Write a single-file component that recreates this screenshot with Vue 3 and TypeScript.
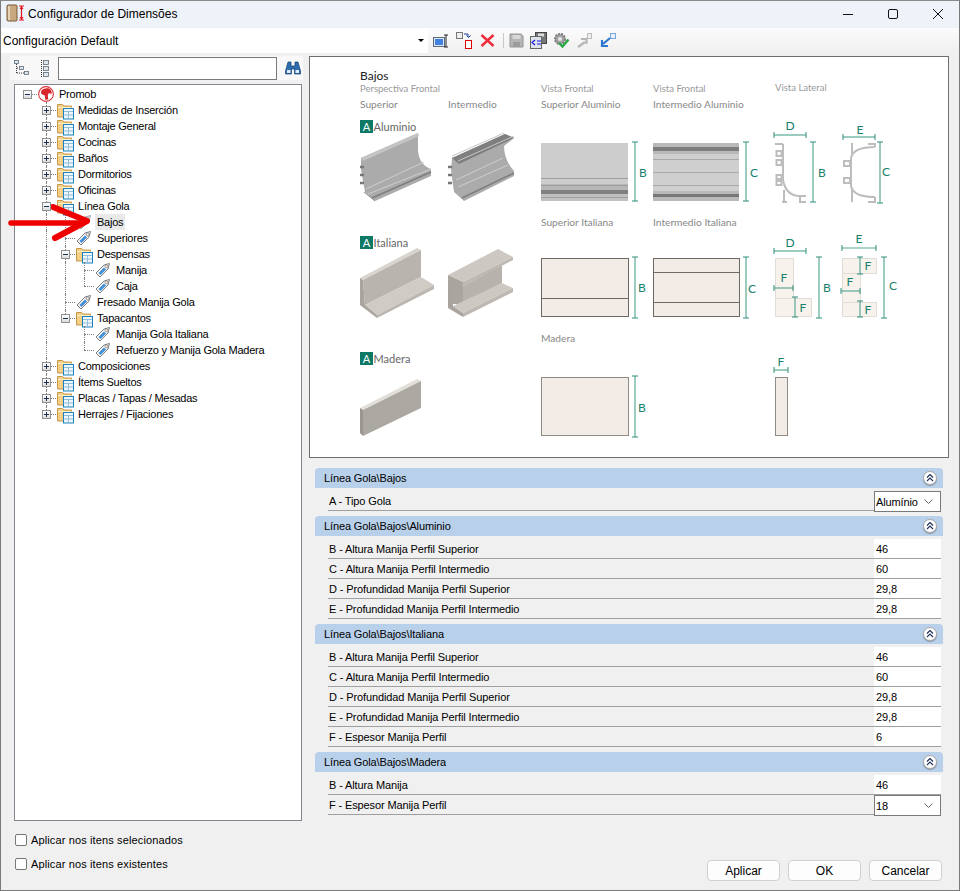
<script setup lang="ts">
type TreeRow = {
	label: string;
	cells: string[];
	icon: "logo" | "folder" | "tag" | "tagGray";
	selected?: boolean;
};

type ParamRow = { label: string; value: string; select?: boolean };
type Section = { title: string; rows: ParamRow[] };

const treeRows: TreeRow[] = [
	{ label: "Promob", cells: ["stub-"], icon: "logo" },
	{ label: "Medidas de Inserción", cells: ["none", "tee+"], icon: "folder" },
	{ label: "Montaje General", cells: ["none", "tee+"], icon: "folder" },
	{ label: "Cocinas", cells: ["none", "tee+"], icon: "folder" },
	{ label: "Baños", cells: ["none", "tee+"], icon: "folder" },
	{ label: "Dormitorios", cells: ["none", "tee+"], icon: "folder" },
	{ label: "Oficinas", cells: ["none", "tee+"], icon: "folder" },
	{ label: "Línea Gola", cells: ["none", "tee-"], icon: "folder" },
	{ label: "Bajos", cells: ["none", "line", "tee"], icon: "tagGray", selected: true },
	{ label: "Superiores", cells: ["none", "line", "tee"], icon: "tag" },
	{ label: "Despensas", cells: ["none", "line", "tee-"], icon: "folder" },
	{ label: "Manija", cells: ["none", "line", "line", "tee"], icon: "tag" },
	{ label: "Caja", cells: ["none", "line", "line", "elbow"], icon: "tag" },
	{ label: "Fresado Manija Gola", cells: ["none", "line", "tee"], icon: "tag" },
	{ label: "Tapacantos", cells: ["none", "line", "elbow-"], icon: "folder" },
	{ label: "Manija Gola Italiana", cells: ["none", "line", "none", "tee"], icon: "tag" },
	{ label: "Refuerzo y Manija Gola Madera", cells: ["none", "line", "none", "elbow"], icon: "tag" },
	{ label: "Composiciones", cells: ["none", "tee+"], icon: "folder" },
	{ label: "Ítems Sueltos", cells: ["none", "tee+"], icon: "folder" },
	{ label: "Placas / Tapas / Mesadas", cells: ["none", "tee+"], icon: "folder" },
	{ label: "Herrajes / Fijaciones", cells: ["none", "elbow+"], icon: "folder" },
];

const sections: Section[] = [
	{
		title: "Línea Gola\\Bajos",
		rows: [{ label: "A - Tipo Gola", value: "Alumínio", select: true }],
	},
	{
		title: "Línea Gola\\Bajos\\Aluminio",
		rows: [
			{ label: "B - Altura Manija Perfil Superior", value: "46" },
			{ label: "C - Altura Manija Perfil Intermedio", value: "60" },
			{ label: "D - Profundidad Manija Perfil Superior", value: "29,8" },
			{ label: "E - Profundidad Manija Perfil Intermedio", value: "29,8" },
		],
	},
	{
		title: "Línea Gola\\Bajos\\Italiana",
		rows: [
			{ label: "B - Altura Manija Perfil Superior", value: "46" },
			{ label: "C - Altura Manija Perfil Intermedio", value: "60" },
			{ label: "D - Profundidad Manija Perfil Superior", value: "29,8" },
			{ label: "E - Profundidad Manija Perfil Intermedio", value: "29,8" },
			{ label: "F - Espesor Manija Perfil", value: "6" },
		],
	},
	{
		title: "Línea Gola\\Bajos\\Madera",
		rows: [
			{ label: "B - Altura Manija", value: "46" },
			{ label: "F - Espesor Manija Perfil", value: "18", select: true },
		],
	},
];

// each dimension line: [x1, y1, x2, y2], ticks are drawn across both ends
const dims: number[][] = [
	[635, 142, 635, 201],
	[746, 142, 746, 201],
	[774, 135, 806, 135],
	[813, 142, 813, 202],
	[843, 137, 875, 137],
	[880, 142, 880, 203],
	[635, 257, 635, 318],
	[746, 257, 746, 318],
	[774, 251, 806, 251],
	[819, 257, 819, 318],
	[842, 248, 876, 248],
	[884, 257, 884, 318],
	[635, 376, 635, 437],
	[774, 370, 788, 370],
	[774, 288, 793, 288],
	[795, 297, 795, 317],
	[841, 291, 860, 291],
	[860, 257, 860, 274],
	[860, 301, 860, 317],
];

const dimLabels: [string, number, number][] = [
	["B", 643, 177],
	["C", 754, 177],
	["D", 790, 130],
	["B", 822, 177],
	["E", 860, 134],
	["C", 886, 176],
	["B", 642, 292],
	["C", 752, 293],
	["D", 790, 247],
	["B", 827, 292],
	["E", 859, 243],
	["C", 893, 290],
	["B", 642, 412],
	["F", 781, 366],
	["F", 784, 282],
	["F", 803, 312],
	["F", 868, 270],
	["F", 850, 286],
	["F", 868, 314],
];

const badges: [number, string][] = [
	[120, "Aluminio"],
	[236, "Italiana"],
	[352, "Madera"],
];

function ticks(d: number[]) {
	const [x1, y1, x2, y2] = d;
	if (x1 === x2) return `M${x1 - 3},${y1}H${x1 + 3}M${x2 - 3},${y2}H${x2 + 3}`;
	return `M${x1},${y1 - 3}V${y1 + 3}M${x2},${y2 - 3}V${y2 + 3}`;
}

function cellKind(cell: string) {
	return cell.replace(/[+-]$/, "");
}

function cellBox(cell: string) {
	if (cell.endsWith("+")) return "plus";
	if (cell.endsWith("-")) return "minus";
	return "";
}
</script>

<template>
	<div class="window">
		<svg class="defs" width="0" height="0">
			<symbol id="folder" viewBox="0 0 18 18">
				<path d="M0.5 2.5h5l1.5 1.5h7.5v11h-14z" fill="#f4cf85" stroke="#c4974a" />
				<path d="M1 5.5h13.5" stroke="#fff0c8" />
				<rect x="6.5" y="6.5" width="10" height="10.5" fill="#eef6fb" stroke="#1c82c0" />
				<path d="M7 9.5h9M7 13h9M11.5 10v6.5" stroke="#8fbfdd" />
			</symbol>
			<symbol id="tag" viewBox="0 0 16 16">
				<path d="M1 11l8-8 5.500-1.500-1.500 5.500-8 8z" fill="#f4f4f4" stroke="#7d7d7d" />
				<path d="M3.500 11l5.500-5.500 2 2-5.500 5.500z" fill="#3f8fd6" />
				<circle cx="11.500" cy="4.500" r="1.300" fill="#fff" stroke="#777" stroke-width="0.800" />
			</symbol>
			<symbol id="tagGray" viewBox="0 0 16 16">
				<path d="M1 11l8-8 5.500-1.500-1.500 5.500-8 8z" fill="#e4e4e4" stroke="#a5a5a5" />
				<circle cx="11.500" cy="4.500" r="1.300" fill="#fff" stroke="#999" stroke-width="0.800" />
			</symbol>
			<symbol id="logo" viewBox="0 0 16 16">
				<circle cx="8" cy="8" r="7.400" fill="#fff" stroke="#d8353a" stroke-width="1.100" />
				<path d="M3 5.500C4.500 2.500 8 1.800 11 2.500c2 1 3 3 2.600 5.500l-2.800-1-1 2.500 0.500 4-3 0.300-0.500-4.300-3.500-1.500z" fill="#d8252c" />
			</symbol>
		</svg>

		<header class="titlebar">
			<svg class="app-icon" width="22" height="20" viewBox="0 0 22 20">
				<rect x="1" y="1" width="10" height="16" rx="1" fill="#c9a77f" stroke="#7a5a3c" />
				<rect x="2" y="2" width="2" height="14" fill="#e6d2b4" />
				<path d="M13 2h5M15.500 2v14M13 16h5" stroke="#e2141e" stroke-width="1.200" fill="none" />
				<path d="M15.500 2l2 3h-4zM15.500 16l2-3h-4z" fill="#e2141e" />
			</svg>
			<span class="title">Configurador de Dimensões</span>
			<div class="win-controls">
				<svg width="12" height="12" viewBox="0 0 12 12"><path d="M1 6.500h10" stroke="#111" /></svg>
				<svg width="12" height="12" viewBox="0 0 12 12"><rect x="1.500" y="1.500" width="9" height="9" rx="1.500" fill="none" stroke="#111" /></svg>
				<svg width="12" height="12" viewBox="0 0 12 12"><path d="M1 1l10 10M11 1l-10 10" stroke="#111" /></svg>
			</div>
		</header>

		<div class="configbar">
			<div class="combo">
				<span>Configuración Default</span>
				<i class="combo-arrow"></i>
			</div>
			<div class="tools">
				<svg width="16" height="16" viewBox="0 0 16 16">
					<rect x="0.500" y="4.500" width="11" height="9" fill="#dfe8f5" stroke="#5b6b80" />
					<rect x="2" y="6" width="8" height="6" fill="#3f80e0" />
					<path d="M11 2h4M13 2v12M11 14h4" stroke="#222" fill="none" />
				</svg>
				<svg width="17" height="17" viewBox="0 0 17 17" class="t-gap">
					<rect x="0.500" y="0.500" width="6" height="6" fill="#eee" stroke="#777" />
					<path d="M8 2h4v3M10.500 3.500l2 2 2-2" stroke="#1a3f9a" fill="none" />
					<rect x="9.500" y="8.500" width="6" height="8" fill="#fff" stroke="#e00000" />
				</svg>
				<svg width="15" height="15" viewBox="0 0 15 15" class="t-gap">
					<path d="M1.500 2l12 11M13.500 2l-12 11" stroke="#ee2b38" stroke-width="2.400" />
				</svg>
				<i class="sep"></i>
				<svg width="15" height="15" viewBox="0 0 15 15" class="t-save">
					<path d="M1 1h11l2 2v11h-13z" fill="#b5b5b5" stroke="#949494" />
					<rect x="3.500" y="2" width="8" height="4" fill="#d8d8d8" />
					<rect x="4" y="9" width="7" height="5" fill="#9c9c9c" />
				</svg>
				<svg width="17" height="17" viewBox="0 0 17 17" class="t-gap3">
					<rect x="5.500" y="0.500" width="11" height="11" fill="#777" stroke="#444" />
					<rect x="8" y="1.500" width="6" height="3" fill="#ddd" />
					<rect x="0.500" y="4.500" width="11" height="12" fill="#dfe4ea" stroke="#666" />
					<path d="M5 8l-3 2.500 3 2.500M7 9h4M7 12h4" stroke="#1616e0" fill="none" stroke-width="1.200" />
				</svg>
				<svg width="17" height="17" viewBox="0 0 17 17" class="t-gap3">
					<circle cx="7" cy="7" r="5" fill="#a3a3a3" stroke="#7c7c7c" stroke-width="2" stroke-dasharray="2 1" />
					<circle cx="7" cy="7" r="2" fill="#e6e6e6" />
					<path d="M6 11l3.500 3.500 6-7" stroke="#27a645" stroke-width="2.400" fill="none" />
				</svg>
				<svg width="16" height="16" viewBox="0 0 16 16" class="t-gap">
					<rect x="10.500" y="0.500" width="4" height="5" fill="#eee" stroke="#bbb" />
					<path d="M1 14l7-5M4 6h5.500v5" stroke="#b5b5b5" stroke-width="2.200" fill="none" />
				</svg>
				<svg width="16" height="16" viewBox="0 0 16 16" class="t-gap">
					<rect x="10.500" y="0.500" width="5" height="5" fill="#e8f1fb" stroke="#7aa7dc" />
					<path d="M10 5l-7 6M2 7v6h6" stroke="#2f78cf" stroke-width="2.200" fill="none" />
				</svg>
			</div>
		</div>

		<main class="content">
			<aside class="left">
				<div class="tree-tools">
					<svg class="tt-a" width="15" height="16" viewBox="0 0 15 16">
						<g fill="#dfe6ee" stroke="#5f6b78" stroke-width="0.800">
							<rect x="0.500" y="0.500" width="4" height="3" />
							<rect x="5.500" y="6.500" width="4" height="3" />
							<rect x="10.500" y="11.500" width="4" height="3" />
						</g>
						<path d="M2.500 4v9M3 8h2M3 13h7" stroke="#333" stroke-dasharray="1 1" fill="none" />
					</svg>
					<svg class="tt-b" width="10" height="17" viewBox="0 0 10 17">
						<path d="M1.500 0v17" stroke="#333" stroke-dasharray="1 1" />
						<g fill="#dfe6ee" stroke="#5f6b78" stroke-width="0.800">
							<rect x="3.500" y="0.500" width="5" height="4" />
							<rect x="3.500" y="6.500" width="5" height="4" />
							<rect x="3.500" y="12.500" width="5" height="4" />
						</g>
					</svg>
					<div class="search"></div>
					<svg class="binoc" width="16" height="14" viewBox="0 0 16 14">
						<path d="M3 1h3v4h4V1h3l2.500 9v3h-6V8H6.500v5h-6v-3z" fill="#2f6cae" stroke="#16406e" stroke-width="0.700" />
						<rect x="2" y="9" width="3.500" height="3" fill="#dfeafa" />
						<rect x="10.500" y="9" width="3.500" height="3" fill="#dfeafa" />
					</svg>
				</div>
				<div class="tree">
					<div v-for="row in treeRows" :key="row.label" class="tree-row">
						<span
							v-for="(cell, i) in row.cells"
							:key="i"
							class="cell"
							:class="cellKind(cell)"
						>
							<i v-if="cellBox(cell)" class="box" :class="cellBox(cell)"></i>
						</span>
						<svg
							class="node-icon"
							:class="{ 'node-folder': row.icon === 'folder' }"
							:width="row.icon === 'folder' ? 18 : 16"
							:height="row.icon === 'folder' ? 18 : 16"
						>
							<use :href="'#' + row.icon" />
						</svg>
						<span class="node-label" :class="{ selected: row.selected }">{{ row.label }}</span>
					</div>
				</div>
				<div class="checks">
					<label class="check"><i></i>Aplicar nos itens selecionados</label>
					<label class="check"><i></i>Aplicar nos itens existentes</label>
				</div>
			</aside>

			<section class="right">
				<div class="preview">
					<svg class="drawing" viewBox="310 57 638 400" width="638" height="400">
						<g class="d-title">
							<text x="360" y="80" class="h1">Bajos</text>
							<text x="360" y="92" class="sub">Perspectiva Frontal</text>
							<text x="541" y="92" class="sub">Vista Frontal</text>
							<text x="653" y="92" class="sub">Vista Frontal</text>
							<text x="775" y="91" class="sub">Vista Lateral</text>
							<text x="360" y="108" class="name">Superior</text>
							<text x="448" y="108" class="name">Intermedio</text>
							<text x="541" y="108" class="name">Superior Aluminio</text>
							<text x="653" y="108" class="name">Intermedio Aluminio</text>
							<text x="541" y="226" class="name">Superior Italiana</text>
							<text x="653" y="226" class="name">Intermedio Italiana</text>
							<text x="541" y="342" class="name">Madera</text>
						</g>

						<g v-for="[y, label] in badges" :key="label">
							<rect x="360" :y="y" width="13" height="13" fill="#0e7a66" />
							<text x="366.500" :y="y + 10.500" class="badge">A</text>
							<text x="373.500" :y="y + 11" class="name dark">{{ label }}</text>
						</g>

						<!-- aluminio superior -->
						<path d="M361 158L418 133V150Q419 165 431 169V176L375 201L365 192L361 170Z" fill="#ababab" />
						<path d="M361 158L418 133L419 136L363 161Z" fill="#c4c4c4" />
						<path d="M366 189L424 162M368 194L431 169" stroke="#cfcfcf" fill="none" />
						<path d="M372 198L431 172" stroke="#7e7e7e" stroke-width="1.500" />
						<path d="M360 167h4M360 175h4M360 183h4" stroke="#777" stroke-width="2.500" />
						<path d="M364 192l11 9" stroke="#8a8a8a" />

						<!-- aluminio intermedio -->
						<path d="M452 158L505 134L514 138L504 146Q504 160 514 171V176L464 201L454 192L451 170Z" fill="#ababab" />
						<path d="M452 158L505 134L514 138L459 164Z" fill="#7f7f7f" />
						<path d="M452 156L504 133M458 161L514 136" stroke="#c6c6c6" />
						<path d="M456 180L503 158M458 187L508 165" stroke="#cfcfcf" />
						<path d="M462 198L514 173" stroke="#7e7e7e" stroke-width="1.500" />
						<path d="M448 167h4M448 175h4M448 183h4" stroke="#777" stroke-width="2.500" />

						<!-- frentes aluminio -->
						<rect x="541" y="143" width="87" height="58" fill="#cdcdcd" />
						<rect x="541" y="184" width="87" height="6" fill="#b7b7b7" />
						<rect x="541" y="190" width="87" height="4" fill="#808080" />
						<rect x="541" y="194" width="87" height="7" fill="#c0c0c0" />
						<path d="M541 178.500h87M541 185.500h87M541 197.500h87" stroke="#9e9e9e" />
						<rect x="653" y="143" width="86" height="58" fill="#cfcfcf" />
						<rect x="653" y="143" width="86" height="11" fill="#b9b9b9" />
						<rect x="653" y="147" width="86" height="4" fill="#7c7c7c" />
						<rect x="653" y="191" width="86" height="10" fill="#b9b9b9" />
						<rect x="653" y="194" width="86" height="3" fill="#777" />
						<path d="M653 159.500h86M653 172.500h86M653 185.500h86" stroke="#a9a9a9" />

						<!-- perfiles laterales -->
						<g fill="none" stroke="#bdbdbd" stroke-width="2">
							<path d="M783 144V180Q786 196 800 196H806M775 144H783M784 190V202M787 202H782M800 196V202H806" />
							<rect x="776.500" y="151" width="5" height="5" />
							<rect x="776.500" y="160" width="5" height="5" />
							<rect x="776.500" y="175" width="5" height="4" />
							<rect x="776.500" y="181" width="5" height="4" />
							<path d="M851 158Q853 147 875 147M852 143V156M868 144H875V147M851 158V186Q853 197 875 197M852 188V202M868 202H875V197" />
							<rect x="844" y="161" width="6" height="5" />
							<rect x="844" y="178" width="6" height="5" />
						</g>

						<!-- italiana superior -->
						<path d="M360 278L417 248L421 250L363 280Z" fill="#d9d5ce" />
						<path d="M363 280L421 250V277L365 305Z" fill="#b9b5ae" />
						<path d="M365 305L421 277L434 285L377 315Z" fill="#d0ccc5" />
						<path d="M360 278L363 280L365 305L377 315V318L360 305Z" fill="#a9a59e" />
						<path d="M377 315L434 285V289L377 318Z" fill="#bcb8b1" />

						<!-- italiana intermedio -->
						<path d="M463 286L502 265V283L463 304Z" fill="#b7b3ac" />
						<path d="M453 280L463 286V304L453 304Z" fill="#aaa69f" />
						<path d="M448 275L498 249L513 257L463 282Z" fill="#cdc9c2" />
						<path d="M448 275L463 282V286L448 279Z" fill="#a9a59e" />
						<path d="M463 282L513 257V260L463 286Z" fill="#bdb9b2" />
						<path d="M448 279L453 280V306L463 313V317L448 308Z" fill="#a9a59e" />
						<path d="M453 306L502 283L513 288L463 313Z" fill="#cdc9c2" />
						<path d="M463 313L513 288V292L463 317Z" fill="#bdb9b2" />

						<!-- madera -->
						<path d="M360 408L417 379L421 381L363 410Z" fill="#e3dfd9" />
						<path d="M363 410L421 381V408L363 436Z" fill="#aba7a1" />
						<path d="M360 408L363 410V436L360 433Z" fill="#9a968f" />

						<!-- frentes italiana y madera -->
						<g fill="#f3ece6" stroke="#6d6963">
							<rect x="541.500" y="258.500" width="87" height="58" />
							<path d="M541 298.500h88" />
							<rect x="653.500" y="258.500" width="86" height="58" />
							<path d="M653 272.500h87M653 302.500h87" />
						</g>
						<g fill="#f3ece6" stroke="#8f8b85">
							<rect x="541.500" y="377.500" width="87" height="58" />
							<rect x="775.500" y="377.500" width="12" height="58" />
						</g>

						<!-- laterales italiana -->
						<g fill="#f8f2ec" stroke="#e2dcd6">
							<path d="M775.500 258.500H793.500V298.500H811.500V316.500H775.500Z" />
							<path d="M775.500 298.500H793.500" />
							<path d="M842.500 258.500H876.500V273.500H860.500V302.500H876.500V316.500H842.500Z" />
							<path d="M842.500 273.500H860.500M842.500 302.500H860.500" />
						</g>

						<g v-for="(d, i) in dims" :key="i" stroke="#5aa896" fill="none">
							<line :x1="d[0]" :y1="d[1]" :x2="d[2]" :y2="d[3]" stroke-width="1.200" />
							<path :d="ticks(d)" stroke="#2f8c78" />
						</g>
						<text v-for="(l, i) in dimLabels" :key="i" :x="l[1]" :y="l[2]" class="dim">{{ l[0] }}</text>
					</svg>
				</div>

				<div class="params">
					<div v-for="s in sections" :key="s.title" class="group">
						<div class="group-head">
							<span>{{ s.title }}</span>
							<i class="collapse">
								<svg width="8" height="8" viewBox="0 0 8 8"><path d="M1 3.500l3-3 3 3M1 7l3-3 3 3" fill="none" stroke="#1c2d5a" stroke-width="1.100" /></svg>
							</i>
						</div>
						<div class="group-body">
							<div v-for="r in s.rows" :key="r.label" class="param">
								<span class="param-label">{{ r.label }}</span>
								<div class="param-value" :class="{ 'is-select': r.select }">
									<span>{{ r.value }}</span>
									<svg v-if="r.select" width="9" height="5" viewBox="0 0 9 5"><path d="M0.500 0.500l4 4 4-4" fill="none" stroke="#666" /></svg>
								</div>
							</div>
						</div>
					</div>
				</div>

				<div class="buttons">
					<button type="button">Aplicar</button>
					<button type="button">OK</button>
					<button type="button">Cancelar</button>
				</div>
			</section>
		</main>

		<svg class="arrow" width="96" height="44" viewBox="0 0 96 44">
			<path d="M10 19H80" stroke="#ee0000" stroke-width="5.500" stroke-linecap="round" fill="none" />
			<path d="M52 3L86 17L54 34" stroke="#ee0000" stroke-width="6" stroke-linecap="round" stroke-linejoin="round" fill="none" />
		</svg>
	</div>
</template>

<style scoped>
.window {
	position: relative;
	box-sizing: border-box;
	width: 960px;
	height: 891px;
	display: flex;
	flex-direction: column;
	background: #f0f0f0;
	border: 1px solid #7a7a7a;
	border-top-color: #8a8a8a;
	font-family: "Liberation Sans", Arial, sans-serif;
	font-size: 11px;
	color: #000;
	overflow: hidden;
}

.defs {
	position: absolute;
}

.titlebar {
	height: 27px;
	flex: none;
	display: flex;
	align-items: center;
	background: #eef2f9;
}

.app-icon {
	margin-left: 5px;
	margin-top: -2px;
}

.title {
	font-size: 12px;
	margin-top: -2px;
}

.win-controls {
	margin-left: auto;
	display: flex;
	gap: 33px;
	margin-right: 15px;
	margin-top: -2px;
}

.configbar {
	height: 25px;
	flex: none;
	display: flex;
	align-items: center;
	background: linear-gradient(#fcfcfc, #efefef);
}

.combo {
	width: 427px;
	height: 24px;
	display: flex;
	align-items: center;
	justify-content: space-between;
	background: #fff;
	padding-left: 2px;
	padding-right: 4px;
	box-sizing: border-box;
	font-size: 12px;
}

.combo-arrow {
	width: 0;
	height: 0;
	border: 3px solid transparent;
	border-top: 3px solid #000;
	border-bottom: 0;
}

.tools {
	display: flex;
	align-items: center;
	margin-left: 5px;
}

.t-gap {
	margin-left: 7px;
}

.sep {
	width: 1px;
	height: 15px;
	background: #c8c8c8;
	margin-left: 8px;
}

.t-save {
	margin-left: 5px;
}

.t-gap3 {
	margin-left: 6px;
}

.content {
	flex: 1;
	display: flex;
	min-height: 0;
	padding-top: 3px;
}

.left {
	width: 293px;
	margin-left: 9px;
	flex: none;
	display: flex;
	flex-direction: column;
}

.tree-tools {
	height: 24px;
	display: flex;
	align-items: center;
	background: #f8f8f8;
}

.tt-a {
	margin-left: 4px;
}

.tt-b {
	margin-left: 11px;
}

.search {
	width: 217px;
	height: 21px;
	margin-left: 8px;
	background: #fff;
	border: 1px solid #7a7a7a;
}

.binoc {
	margin-left: 8px;
}

.tree {
	box-sizing: border-box;
	width: 288px;
	height: 737px;
	margin: 4px 0 0 4px;
	background: #fff;
	border: 1px solid #828790;
	padding: 1px 0 0 3px;
	letter-spacing: -0.24px;
}

.tree-row {
	display: flex;
	align-items: center;
	height: 16px;
	white-space: nowrap;
}

.cell {
	position: relative;
	flex: none;
	width: 19px;
	height: 16px;
}

.cell.line::before,
.cell.tee::before,
.cell.elbow::before {
	content: "";
	position: absolute;
	left: 9px;
	top: 0;
	height: 16px;
	border-left: 1px dotted #808080;
}

.cell.elbow::before {
	height: 8px;
}

.cell.tee::after,
.cell.elbow::after,
.cell.stub::after {
	content: "";
	position: absolute;
	left: 9px;
	top: 8px;
	width: 10px;
	border-top: 1px dotted #808080;
}

.box {
	position: absolute;
	left: 5px;
	top: 4px;
	box-sizing: border-box;
	width: 9px;
	height: 9px;
	border: 1px solid #919191;
	background: linear-gradient(#fff, #dcdcdc);
	z-index: 1;
}

.box::before {
	content: "";
	position: absolute;
	left: 1px;
	top: 3px;
	width: 5px;
	height: 1px;
	background: #1c2d5a;
}

.box.plus::after {
	content: "";
	position: absolute;
	left: 3px;
	top: 1px;
	width: 1px;
	height: 5px;
	background: #1c2d5a;
}

.node-icon {
	flex: none;
	margin-left: 1px;
}

.node-folder {
	margin-right: -2px;
	margin-top: 1px;
}

.node-label {
	margin-left: 3px;
	padding: 0 2px;
	height: 16px;
	line-height: 16px;
}

.node-label.selected {
	background: #e9e9e9;
}

.checks {
	margin-top: 12px;
	margin-left: 5px;
	display: flex;
	flex-direction: column;
	gap: 10px;
	letter-spacing: 0.13px;
}

.check {
	display: flex;
	align-items: center;
	height: 14px;
	gap: 4px;
}

.check i {
	box-sizing: border-box;
	width: 12px;
	height: 12px;
	border: 1px solid #777;
	border-radius: 2px;
	background: #fdfdfd;
}

.right {
	width: 640px;
	margin-left: 6px;
	flex: none;
	display: flex;
	flex-direction: column;
}

.preview {
	box-sizing: border-box;
	width: 640px;
	height: 402px;
	background: #fff;
	border: 1px solid #6e6e6e;
}

.drawing {
	display: block;
}

.h1 {
	font: 12px Lato, sans-serif;
	fill: #222;
}

.sub {
	font: 9.500px Lato, sans-serif;
	fill: #999;
}

.name {
	font: 10.200px Lato, sans-serif;
	fill: #888;
}

.name.dark {
	fill: #666;
	font-size: 11px;
}

.badge {
	font: 11px Lato, sans-serif;
	fill: #fff;
	text-anchor: middle;
}

.dim {
	font: 12px Lato, sans-serif;
	fill: #16806c;
	text-anchor: middle;
}

.params {
	margin: 10px 0 0 6px;
	width: 628px;
	letter-spacing: -0.12px;
}

.group-head {
	height: 20px;
	display: flex;
	align-items: center;
	justify-content: space-between;
	box-sizing: border-box;
	padding: 0 6px 0 9px;
	background: #b9d0ea;
	border-radius: 4px 4px 0 0;
}

.collapse {
	display: flex;
	align-items: center;
	justify-content: center;
	width: 14px;
	height: 14px;
	border-radius: 50%;
	background: #fff;
	border: 1px solid #a9a9a9;
	box-sizing: border-box;
	box-shadow: 0 1px 1px #8a97a8;
}

.group-body {
	padding: 3px 2px 5px 13px;
}

.param {
	display: flex;
	align-items: center;
	justify-content: space-between;
	box-sizing: border-box;
	height: 20px;
	border-bottom: 1px solid #a0a0a0;
}

.param-label {
	padding-left: 1px;
}

.param-value {
	box-sizing: border-box;
	width: 67px;
	height: 19px;
	display: flex;
	align-items: center;
	justify-content: space-between;
	padding: 0 7px 0 2px;
	background: #fff;
}

.param-value.is-select {
	height: 21px;
	margin-top: 1px;
	margin-bottom: -1px;
	border: 1px solid #7a7a7a;
	padding-left: 1px;
}

.buttons {
	margin-top: auto;
	margin-bottom: 9px;
	margin-right: 7px;
	display: flex;
	justify-content: flex-end;
	gap: 8px;
}

.buttons button {
	width: 73px;
	height: 21px;
	padding: 0;
	background: #fdfdfd;
	border: 1px solid #d0d0d0;
	border-radius: 4px;
	font: 12px "Liberation Sans", Arial, sans-serif;
	color: #000;
}

.arrow {
	position: absolute;
	left: 0;
	top: 203px;
	pointer-events: none;
}
</style>

<style>
html,
body {
	margin: 0;
	background: #f0f0f0;
}
</style>
